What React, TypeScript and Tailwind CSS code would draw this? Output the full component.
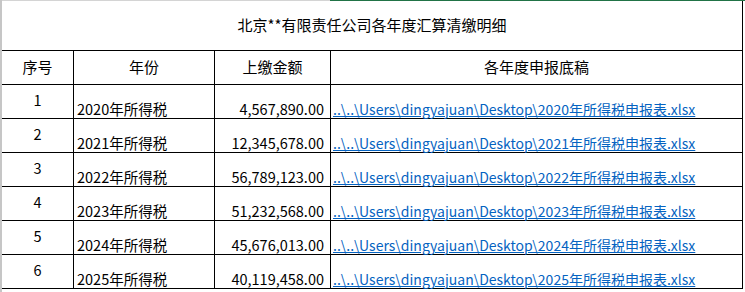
const rows = [
  { no: 1, year: '2020', amount: '4,567,890.00' },
  { no: 2, year: '2021', amount: '12,345,678.00' },
  { no: 3, year: '2022', amount: '56,789,123.00' },
  { no: 4, year: '2023', amount: '51,232,568.00' },
  { no: 5, year: '2024', amount: '45,676,013.00' },
  { no: 6, year: '2025', amount: '40,119,458.00' },
];

const font = "font-['Noto_Sans_CJK_SC','Noto_Sans',sans-serif]";
const grid = 'grid grid-cols-[72px_141px_116px_412px]';

export default function App() {
  return (
    <div className={`w-[745px] h-[292px] bg-white overflow-hidden border-l-2 border-[#c6c6c6] text-black ${font}`}>
      <div className="flex h-px">
        <div className="w-[328px] bg-[#d4d4d4]" />
        <div className="flex-1 bg-[#217346]" />
      </div>

      <div className="w-[741px]">
        <div className="h-[50px] flex items-center justify-center border-r border-b border-black text-[15px] pb-px">
          北京**有限责任公司各年度汇算清缴明细
        </div>

        <div className={`${grid} h-[34px] border-b border-black text-[15px]`}>
          <div className="flex items-center justify-center border-r border-black">序号</div>
          <div className="flex items-center justify-center border-r border-black">年份</div>
          <div className="flex items-center justify-center border-r border-black">上缴金额</div>
          <div className="flex items-center justify-center border-r border-black">各年度申报底稿</div>
        </div>

        {rows.map((r) => (
          <div key={r.no} className={`${grid} h-[34px] border-b border-black text-[14.5px] leading-[18px]`}>
            <div className="flex items-center justify-center border-r border-black pb-1">{r.no}</div>
            <div className="flex items-end pl-[3px] border-r border-black">{r.year}年所得税</div>
            <div className="flex items-end justify-end pr-[6px] border-r border-black">{r.amount}</div>
            <div className="flex items-end pl-[2px] border-r border-black">
              <span className="text-[14px] text-[#0563c1] underline underline-offset-1 whitespace-nowrap">
                ..\..\Users\dingyajuan\Desktop\{r.year}年所得税申报表.xlsx
              </span>
            </div>
          </div>
        ))}
      </div>
    </div>
  );
}
